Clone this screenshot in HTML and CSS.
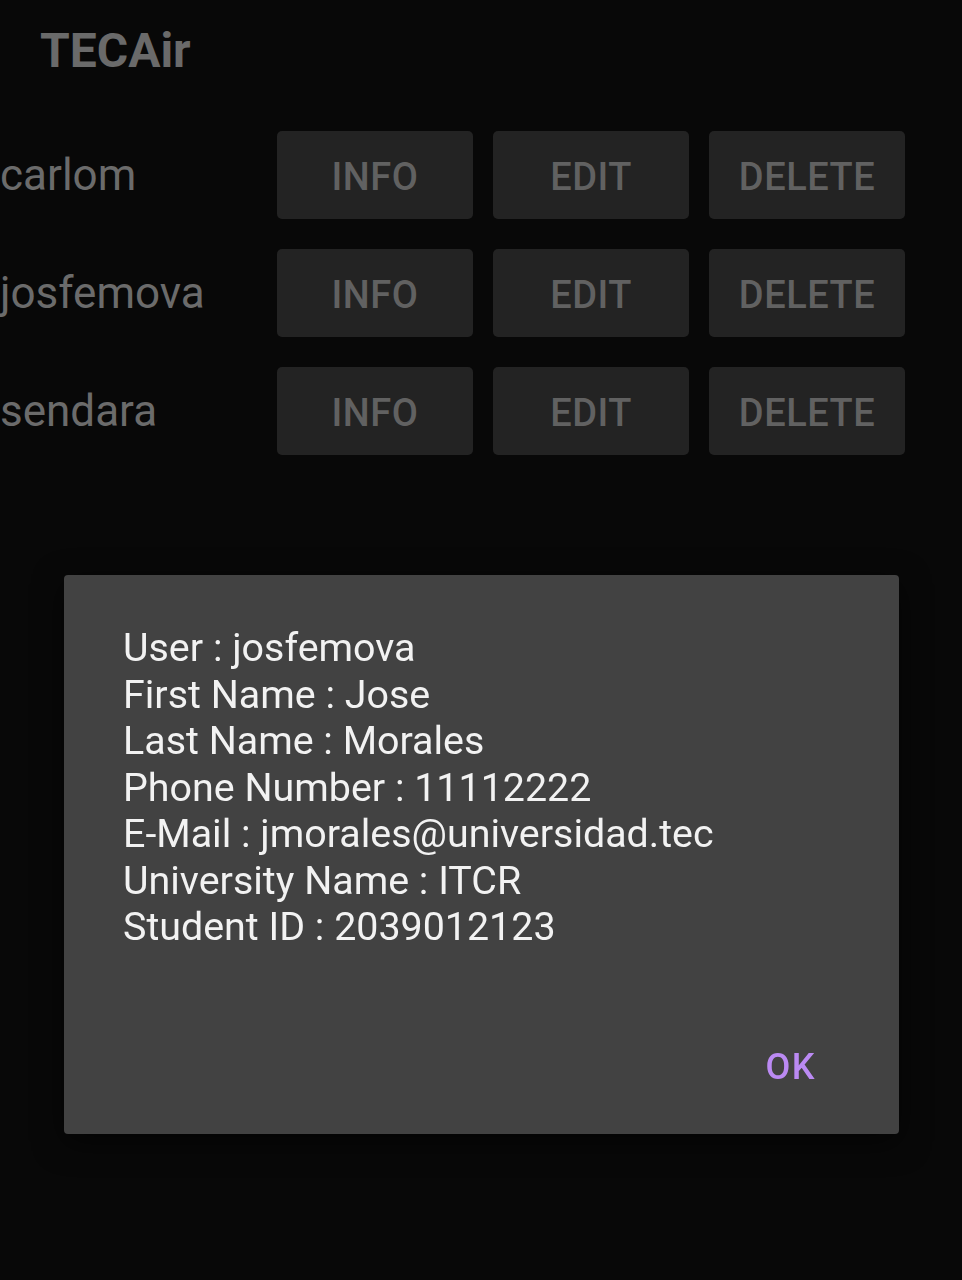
FILE: index.html
```html
<!DOCTYPE html>
<html>
<head>
<meta charset="utf-8">
<link rel="stylesheet" href="styles.css">
</head>
<body>
<div class="app">
  <h1 class="title">TECAir</h1>
  <div class="list">
    <div class="row">
      <span class="name">carlom</span>
      <div class="btn">INFO</div>
      <div class="btn">EDIT</div>
      <div class="btn">DELETE</div>
    </div>
    <div class="row">
      <span class="name">josfemova</span>
      <div class="btn">INFO</div>
      <div class="btn">EDIT</div>
      <div class="btn">DELETE</div>
    </div>
    <div class="row">
      <span class="name">sendara</span>
      <div class="btn">INFO</div>
      <div class="btn">EDIT</div>
      <div class="btn">DELETE</div>
    </div>
  </div>
</div>
<div class="dialog">
  <div class="message">
    <div>User : josfemova</div>
    <div>First Name : Jose</div>
    <div>Last Name : Morales</div>
    <div>Phone Number : 11112222</div>
    <div>E-Mail : jmorales@universidad.tec</div>
    <div>University Name : ITCR</div>
    <div>Student ID : 2039012123</div>
  </div>
  <div class="actions">
    <span class="ok">OK</span>
  </div>
</div>
</body>
</html>
```

FILE: styles.css
```css
html, body {
  margin: 0;
  padding: 0;
  background: #080808;
  font-family: Roboto, "Noto Sans", sans-serif;
}
.app {
  width: 962px;
  height: 1280px;
}
.title {
  margin: 0;
  padding: 22px 0 0 40px;
  height: 131px;
  box-sizing: border-box;
  font-size: 48px;
  line-height: 57px;
  font-weight: 700;
  color: #6a6a6a;
}
.list {
  display: flex;
  flex-direction: column;
  gap: 30px;
}
.row {
  display: flex;
  align-items: center;
  gap: 20px;
  height: 88px;
}
.name {
  width: 257px;
  font-size: 44px;
  color: #6b6b6b;
}
.btn {
  width: 196px;
  height: 88px;
  background: #232323;
  border-radius: 5px;
  display: flex;
  align-items: center;
  justify-content: center;
  padding-top: 4px;
  box-sizing: border-box;
  font-size: 38px;
  font-weight: 500;
  color: #616161;
  letter-spacing: 0.5px;
}
.dialog {
  position: fixed;
  left: 64px;
  top: 575px;
  width: 835px;
  height: 559px;
  background: #424242;
  border-radius: 4px;
  box-shadow: 0 8px 30px rgba(0,0,0,0.6);
  display: flex;
  flex-direction: column;
  box-sizing: border-box;
  padding: 50px 59px 0 59px;
}
.message {
  font-size: 39.4px;
  line-height: 46.5px;
  color: #f2f2f2;
}
.actions {
  margin-top: auto;
  height: 88px;
  display: flex;
  justify-content: flex-end;
  align-items: flex-start;
  padding-right: 24px;
}
.ok {
  font-size: 36px;
  font-weight: 500;
  color: #bb8af3;
  letter-spacing: 1.5px;
}
```
